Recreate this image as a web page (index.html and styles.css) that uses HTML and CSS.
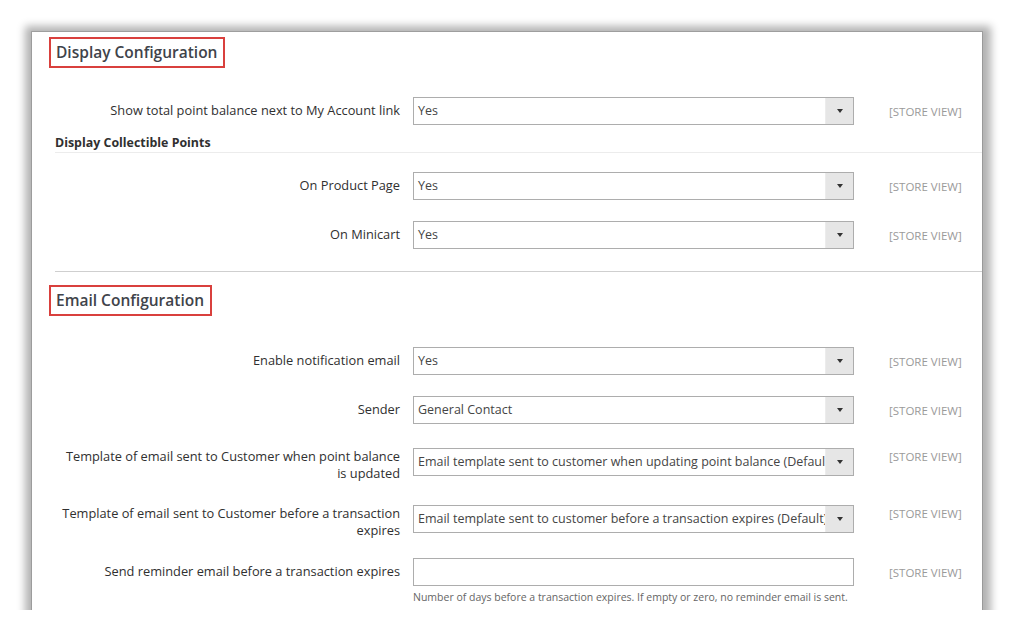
FILE: index.html
```html
<!DOCTYPE html>
<html lang="en">
<head>
<meta charset="utf-8">
<title>Reward Points Configuration</title>
<link rel="stylesheet" href="styles.css">
</head>
<body>
<div class="frame">
  <div class="panel">
    <h2 class="section-title"><span class="marked">Display Configuration</span></h2>

    <div class="row row-first">
      <label class="label">Show total point balance next to My Account link</label>
      <div class="control"><div class="select"><span class="value">Yes</span><span class="btn"><i class="caret"></i></span></div></div>
      <div class="scope">[STORE VIEW]</div>
    </div>

    <h3 class="subtitle">Display Collectible Points</h3>

    <div class="row row-sub">
      <label class="label">On Product Page</label>
      <div class="control"><div class="select"><span class="value">Yes</span><span class="btn"><i class="caret"></i></span></div></div>
      <div class="scope">[STORE VIEW]</div>
    </div>

    <div class="row">
      <label class="label">On Minicart</label>
      <div class="control"><div class="select"><span class="value">Yes</span><span class="btn"><i class="caret"></i></span></div></div>
      <div class="scope">[STORE VIEW]</div>
    </div>

    <hr class="separator">

    <h2 class="section-title section-title-2"><span class="marked">Email Configuration</span></h2>

    <div class="row row-first2">
      <label class="label">Enable notification email</label>
      <div class="control"><div class="select"><span class="value">Yes</span><span class="btn"><i class="caret"></i></span></div></div>
      <div class="scope">[STORE VIEW]</div>
    </div>

    <div class="row">
      <label class="label">Sender</label>
      <div class="control"><div class="select"><span class="value">General Contact</span><span class="btn"><i class="caret"></i></span></div></div>
      <div class="scope">[STORE VIEW]</div>
    </div>

    <div class="row row-tall">
      <label class="label">Template of email sent to Customer when point balance is updated</label>
      <div class="control"><div class="select"><span class="value">Email template sent to customer when updating point balance (Default)</span><span class="btn"><i class="caret"></i></span></div></div>
      <div class="scope">[STORE VIEW]</div>
    </div>

    <div class="row row-tall">
      <label class="label">Template of email sent to Customer before a transaction expires</label>
      <div class="control"><div class="select"><span class="value">Email template sent to customer before a transaction expires (Default)</span><span class="btn"><i class="caret"></i></span></div></div>
      <div class="scope">[STORE VIEW]</div>
    </div>

    <div class="row row-last">
      <label class="label">Send reminder email before a transaction expires</label>
      <div class="control">
        <div class="input"></div>
        <p class="note">Number of days before a transaction expires. If empty or zero, no reminder email is sent.</p>
      </div>
      <div class="scope">[STORE VIEW]</div>
    </div>
  </div>
</div>
</body>
</html>
```

FILE: styles.css
```css
* { box-sizing: border-box; }

html, body {
  margin: 0;
  padding: 0;
  background: #ffffff;
}

body {
  font-family: "Open Sans", "Liberation Sans", sans-serif;
  color: #303030;
}

.frame {
  padding: 32px 0 0 32px;
}

.panel {
  width: 950px;
  height: 578px;
  background: #ffffff;
  overflow: hidden;
  padding: 5px 0 0 23px;
  box-shadow: 0 0 0 1px rgba(0, 0, 0, 0.14), 1px 2px 8px 8px rgba(0, 0, 0, 0.3);
}

.section-title {
  margin: 0;
  font-size: 15.5px;
  font-weight: 600;
  color: #40434a;
  line-height: 26px;
  height: 30px;
}

.marked {
  display: inline-block;
  margin-left: -6px;
  padding: 0 6px 0 5px;
  border: 2px solid #d9403d;
  line-height: 27px;
}

.section-title-2 {
  margin-top: 13px;
}

.row {
  display: grid;
  grid-template-columns: 343px 441px 1fr;
  column-gap: 13px;
  align-items: start;
  margin: 0 0 21px 2px;
}

.row-first { margin-top: 30px; margin-bottom: 9px; }
.row-sub { margin-top: 19px; }
.row-first2 { margin-top: 32px; }
.row-tall { padding-top: 3px; margin-bottom: 20px; }
.row-last { margin-top: -1px; margin-bottom: 0; }

.label {
  font-size: 12.8px;
  line-height: 17px;
  text-align: right;
  padding-top: 5px;
  color: #303030;
}

.row-tall .label { padding-top: 0; }

.control { min-width: 0; }

.select {
  display: flex;
  height: 28px;
  border: 1px solid #adadad;
  background: #ffffff;
}

.value {
  flex: 1;
  min-width: 0;
  overflow: hidden;
  white-space: nowrap;
  font-size: 12.5px;
  line-height: 26px;
  padding-left: 4px;
  padding-right: 6px;
  color: #454545;
}

.btn {
  width: 28px;
  flex: none;
  background: #e6e6e6;
  border-left: 1px solid #ececec;
  display: flex;
  align-items: center;
  justify-content: center;
}

.caret {
  width: 0;
  height: 0;
  border-left: 3.5px solid transparent;
  border-right: 3.5px solid transparent;
  border-top: 4px solid #333333;
}

.input {
  height: 28px;
  border: 1px solid #adadad;
  background: #ffffff;
}

.note {
  margin: 4px 0 0;
  font-size: 10.5px;
  line-height: 14px;
  color: #666666;
  white-space: nowrap;
}

.scope {
  padding-left: 22px;
  font-size: 11.5px;
  line-height: 17px;
  padding-top: 6px;
  color: #9a9a9a;
  white-space: nowrap;
}

.row-tall .scope { padding-top: 0; }

.subtitle {
  margin: 0;
  font-size: 12.4px;
  font-weight: 700;
  line-height: 17px;
  color: #303030;
  padding-bottom: 1px;
  border-bottom: 1px solid #ececec;
}

.separator {
  margin: 22px 0 0;
  border: 0;
  border-top: 1px solid #cfcfcf;
  height: 0;
}
```
